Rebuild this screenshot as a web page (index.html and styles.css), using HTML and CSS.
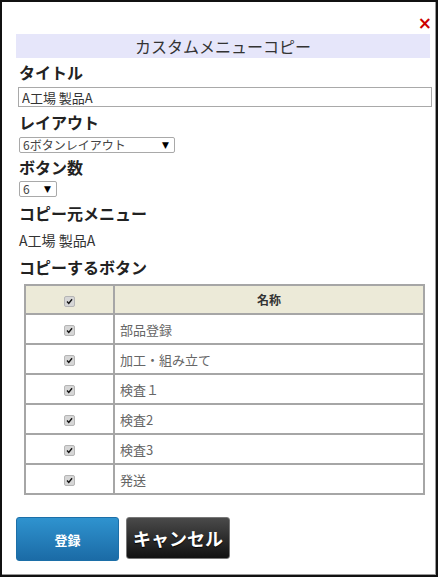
FILE: index.html
```html
<!DOCTYPE html>
<html lang="ja">
<head>
<meta charset="utf-8">
<title>カスタムメニューコピー</title>
<link rel="stylesheet" href="styles.css">
</head>
<body>
<div class="frame">
  <div class="dialog">
    <div class="close-row"><span class="close">×</span></div>
    <div class="title-bar">カスタムメニューコピー</div>
    <div class="label l-title">タイトル</div>
    <input class="text-input" type="text" value="A工場 製品A">
    <div class="label l-layout">レイアウト</div>
    <div class="select sel-layout"><span class="sel-text">6ボタンレイアウト</span><span class="arrow">▼</span></div>
    <div class="label l-count">ボタン数</div>
    <div class="select sel-count"><span class="sel-text">6</span><span class="arrow">▼</span></div>
    <div class="label l-src">コピー元メニュー</div>
    <div class="src-value">A工場 製品A</div>
    <div class="label l-copy">コピーするボタン</div>
    <table class="btn-table">
      <thead>
        <tr><th class="c-check"><span class="cb"><svg viewBox="0 0 11 11" width="11" height="11"><path d="M2.5 5.6 L4.6 7.8 L8.6 2.8" fill="none" stroke="#111" stroke-width="1.7"/></svg></span></th><th class="c-name">名称</th></tr>
      </thead>
      <tbody>
        <tr><td class="c-check"><span class="cb"><svg viewBox="0 0 11 11" width="11" height="11"><path d="M2.5 5.6 L4.6 7.8 L8.6 2.8" fill="none" stroke="#111" stroke-width="1.7"/></svg></span></td><td class="c-name">部品登録</td></tr>
        <tr><td class="c-check"><span class="cb"><svg viewBox="0 0 11 11" width="11" height="11"><path d="M2.5 5.6 L4.6 7.8 L8.6 2.8" fill="none" stroke="#111" stroke-width="1.7"/></svg></span></td><td class="c-name">加工・組み立て</td></tr>
        <tr><td class="c-check"><span class="cb"><svg viewBox="0 0 11 11" width="11" height="11"><path d="M2.5 5.6 L4.6 7.8 L8.6 2.8" fill="none" stroke="#111" stroke-width="1.7"/></svg></span></td><td class="c-name">検査１</td></tr>
        <tr><td class="c-check"><span class="cb"><svg viewBox="0 0 11 11" width="11" height="11"><path d="M2.5 5.6 L4.6 7.8 L8.6 2.8" fill="none" stroke="#111" stroke-width="1.7"/></svg></span></td><td class="c-name">検査2</td></tr>
        <tr><td class="c-check"><span class="cb"><svg viewBox="0 0 11 11" width="11" height="11"><path d="M2.5 5.6 L4.6 7.8 L8.6 2.8" fill="none" stroke="#111" stroke-width="1.7"/></svg></span></td><td class="c-name">検査3</td></tr>
        <tr><td class="c-check"><span class="cb"><svg viewBox="0 0 11 11" width="11" height="11"><path d="M2.5 5.6 L4.6 7.8 L8.6 2.8" fill="none" stroke="#111" stroke-width="1.7"/></svg></span></td><td class="c-name">発送</td></tr>
      </tbody>
    </table>
    <div class="actions">
      <button class="btn btn-primary" type="button">登録</button>
      <button class="btn btn-dark" type="button">キャンセル</button>
    </div>
  </div>
</div>
</body>
</html>
```
FILE: styles.css
```css
html, body {
  margin: 0;
  padding: 0;
  background: #fff;
}
body {
  font-family: "Noto Sans CJK JP", "Noto Sans", sans-serif;
  color: #222;
}
.frame {
  width: 438px;
  height: 577px;
  box-sizing: border-box;
  border: 2px solid #111;
}
.dialog {
  height: 100%;
  box-sizing: border-box;
  padding: 0 6px 0 14px;
  box-shadow: inset -1px -1px 0 #999;
}
.close-row {
  height: 32px;
  display: flex;
  justify-content: flex-end;
  align-items: flex-end;
}
.close {
  color: #c00;
  font-family: "DejaVu Sans", sans-serif;
  font-weight: bold;
  font-size: 17px;
  line-height: 16px;
  margin: 0 -2px 3px 0;
}
.title-bar {
  height: 24px;
  line-height: 24px;
  background: #e6e6fa;
  text-align: center;
  font-size: 16px;
  color: #333;
}
.label {
  font-size: 16px;
  font-weight: bold;
  color: #222;
  padding-left: 3px;
}
.l-title { height: 29px; line-height: 29px; }
.l-layout { height: 30px; line-height: 30px; }
.l-count { height: 28px; line-height: 28px; }
.l-src { height: 33px; line-height: 33px; }
.l-copy { height: 34px; line-height: 34px; }
.text-input {
  display: block;
  box-sizing: border-box;
  width: 414px;
  height: 20px;
  margin: 0 0 0 2px;
  padding: 0 3px;
  border: 1px solid #a9a9a9;
  font-family: "Noto Sans CJK JP", sans-serif;
  font-size: 13px;
  color: #333;
  outline: none;
}
.select {
  box-sizing: border-box;
  height: 16px;
  margin-left: 3px;
  border: 1px solid #a9a9a9;
  border-radius: 2px;
  display: flex;
  align-items: center;
  justify-content: space-between;
  overflow: hidden;
  font-size: 12px;
  color: #444;
  padding: 0 5px 0 3px;
}
.sel-layout { width: 156px; }
.sel-count { width: 38px; }
.sel-text { line-height: 14px; }
.arrow {
  font-family: "DejaVu Sans", sans-serif;
  font-size: 9px;
  color: #000;
  line-height: 14px;
}
.src-value {
  height: 20px;
  line-height: 20px;
  font-size: 14px;
  color: #333;
  padding-left: 3px;
}
.btn-table {
  margin: 0 0 0 8px;
  width: 401px;
  border: 1px solid #a6a6a6;
  border-spacing: 0;
  border-collapse: separate;
  font-size: 13px;
}
.btn-table th, .btn-table td {
  border: 1px solid #a6a6a6;
  height: 28px;
  padding: 0;
}
.btn-table th {
  background: #ecead8;
  font-size: 12px;
  font-weight: bold;
  color: #333;
  height: 27px;
}
.c-check {
  width: 87px;
  text-align: center;
}
.btn-table td.c-name {
  padding-left: 5px;
  color: #666;
}
.cb {
  display: inline-flex;
  width: 11px;
  height: 11px;
  box-sizing: border-box;
  border-radius: 2px;
  background: #d6d6d6;
  border: 1px solid #b5b5b5;
  vertical-align: middle;
  align-items: center;
  justify-content: center;
}
.cb svg { display: block; }
.actions {
  display: flex;
  gap: 7px;
  margin-top: 22px;
  align-items: flex-start;
}
.btn {
  border-radius: 3px;
  color: #fff;
  font-family: "Noto Sans CJK JP", sans-serif;
  font-weight: bold;
  cursor: pointer;
  padding: 0;
}
.btn-primary {
  width: 103px;
  height: 44px;
  font-size: 13px;
  background: linear-gradient(#2f93cf, #1b6ba6);
  border: 1px solid #1c6fa8;
}
.btn-dark {
  width: 104px;
  height: 42px;
  font-size: 18px;
  background: linear-gradient(#4a4a4a, #111);
  border: 1px solid #777;
  text-shadow: 0 1px 1px #000;
}
```
